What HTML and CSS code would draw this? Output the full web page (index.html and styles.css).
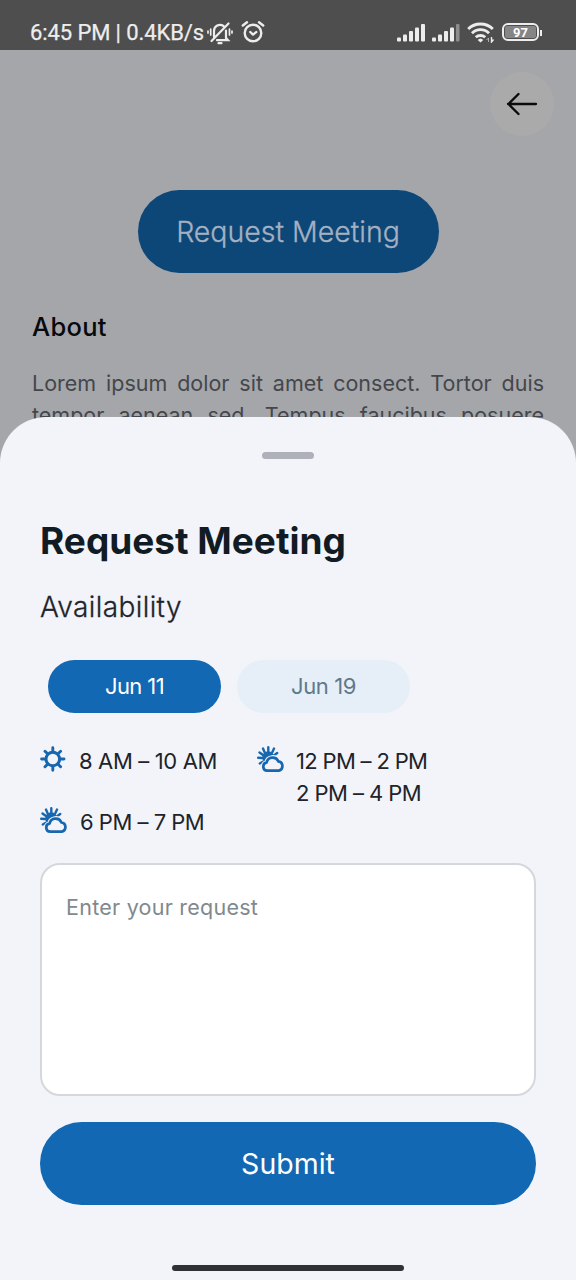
FILE: index.html
```html
<!DOCTYPE html>
<html lang="en">
<head>
<meta charset="utf-8">
<title>Request Meeting</title>
<link rel="stylesheet" href="styles.css">
</head>
<body>
<svg class="defs" width="0" height="0" aria-hidden="true">
  <symbol id="cloud-sun" viewBox="0 0 27 27">
    <path d="M11.300 1.300v4M6 2.600l1.600 3.600M17 2.600l-1.700 3.600M2.500 6.500l3.200 2.300M20.200 7l-2.700 1.900M1.200 11.800l4 .2M2.800 17.500l3-1.800" fill="none" stroke="currentColor" stroke-width="2.400" stroke-linecap="round"/>
    <circle cx="11.300" cy="11.300" r="6.100" fill="currentColor"/>
    <path d="M10.200 24.700a4.200 4.200 0 0 1-.6-8.300a6.200 6.200 0 0 1 11.700-1.100a4.800 4.800 0 0 1 .5 9.400Z" fill="#f2f4fa" stroke="#f2f4fa" stroke-width="5"/>
    <path d="M10.200 24.700a4.200 4.200 0 0 1-.6-8.300a6.200 6.200 0 0 1 11.700-1.100a4.800 4.800 0 0 1 .5 9.400Z" fill="none" stroke="currentColor" stroke-width="2.700"/>
  </symbol>
</svg>
<main class="phone">
  <header class="status">
    <span class="status-text">6:45 PM | 0.4KB/s</span>
    <svg class="bell" width="26" height="24" viewBox="0 0 26 24" fill="none" stroke="currentColor" stroke-width="2.200" stroke-linecap="round">
      <path d="M7 16V10a6 6 0 0 1 9.500-5M19 9.500v7.500l2 2.200H10M4.500 20 21.500 2.500"/>
      <path d="M11.500 22.200h3" /><path d="M3.700 8v6M1 10v2M22.500 8v6M25 10v2" stroke-width="1.700"/>
    </svg>
    <svg class="alarm" width="24" height="24" viewBox="0 0 24 24" fill="none" stroke="currentColor" stroke-width="2.400" stroke-linecap="round" stroke-linejoin="round">
      <circle cx="12" cy="13" r="8.300"/><path d="M1.800 5.500 6 2.200M22.200 5.500 18 2.200M9.300 12l2.700 2.600 3.200-2.500" />
    </svg>
    <svg class="signal first" width="28" height="20" viewBox="0 0 28 20" fill="currentColor">
      <rect y="14.500" width="4" height="4" rx="1"/><rect x="6" y="11.500" width="4" height="7" rx="1"/><rect x="12" y="8" width="4" height="10.500" rx="1"/><rect x="18" y="4.500" width="4" height="14" rx="1"/><rect x="24" y="1" width="4" height="17.500" rx="1"/>
    </svg>
    <svg class="signal" width="28" height="20" viewBox="0 0 28 20" fill="currentColor">
      <rect y="14.500" width="4" height="4" rx="1"/><rect x="6" y="11.500" width="4" height="7" rx="1"/><rect x="12" y="8" width="4" height="10.500" rx="1"/><rect x="18" y="4.500" width="4" height="14" rx="1"/><rect x="24" y="1" width="3.500" height="17.500" rx="1" opacity=".4"/>
    </svg>
    <svg class="wifi" width="28" height="21" viewBox="0 0 28 21" fill="none" stroke="currentColor" stroke-width="2.900">
      <path d="M1.200 7a17.500 17.500 0 0 1 24.600 0M5 11.200a12 12 0 0 1 17 0M8.800 15.300a7 7 0 0 1 9.400 0"/>
      <path d="m13.500 20.500-2.800-2.500q2.800-3.200 5.600 0Z" fill="currentColor" stroke="none"/>
      <path d="M21.500 20v-4l-2 2" stroke-width="1" opacity=".6"/><path d="M24.500 15v5l2-2.500" stroke-width="1.400"/>
    </svg>
    <span class="battery"><span class="charge">97</span></span><i class="battery-tip"></i>
  </header>

  <section class="profile">
    <div class="back"><svg width="32" height="24" viewBox="0 0 32 24" fill="none" stroke="#0b0b0c" stroke-width="2.300" stroke-linecap="round" stroke-linejoin="round"><path d="M30 12H2M12.500 2 2.500 12l10 10"/></svg></div>
    <div class="request"><span>Request Meeting</span></div>
    <h2 class="about">About</h2>
    <p class="bio">Lorem ipsum dolor sit amet consect. Tortor duis tempor aenean sed. Tempus faucibus posuere</p>
  </section>

  <section class="sheet">
    <div class="handle"></div>
    <h1 class="title">Request Meeting</h1>
    <h3 class="availability">Availability</h3>
    <div class="dates"><div class="date active">Jun 11</div><div class="date">Jun 19</div></div>
    <div class="slots">
      <div class="slot morning">
        <svg class="weather" viewBox="0 0 27 27" fill="none" stroke="currentColor" stroke-width="2.900" stroke-linecap="round"><circle cx="12.800" cy="13" r="6.800" stroke-width="3"/><path d="M12.800 1.800v4M12.800 20.200v4M1.600 13h4M20 13h4M5 5.200l2.600 2.600M18 18.200l2.600 2.600M20.600 5.200l-2.600 2.600M7.600 18.200l-2.600 2.600"/></svg>
        <div>8 AM – 10 AM</div>
      </div>
      <div class="slot noon"><svg class="weather"><use href="#cloud-sun"/></svg><div><span class="t1">12 PM – 2 PM</span><br><span class="t2">2 PM – 4 PM</span></div></div>
      <div class="slot evening"><svg class="weather"><use href="#cloud-sun"/></svg><div>6 PM – 7 PM</div></div>
    </div>
    <textarea class="message" placeholder="Enter your request"></textarea>
    <button class="submit">Submit</button>
    <div class="home-bar"></div>
  </section>
</main>
</body>
</html>
```
FILE: styles.css
```css
* { box-sizing: border-box; }
body { margin: 0; font-family: Inter, "Open Sans", sans-serif; }
.defs { position: absolute; }
.phone { position: relative; width: 576px; height: 1280px; overflow: hidden; background: #a4a6aa; }
.status { display: flex; align-items: center; height: 50px; padding: 15px 32px 0 30px; background: #4e4e4e; color: #ededed; }
.status-text { width: 173px; padding-top: 1px; font: 400 22px/36px Roboto, sans-serif; -webkit-text-stroke: .25px; letter-spacing: -.1px; white-space: nowrap; }
.bell { margin-left: 4px; }
.alarm { margin-left: 8px; margin-top: -2px; }
.signal { margin-left: 7px; }
.signal.first { margin-left: 132px; }
.wifi { margin-left: 7px; flex: none; }
.battery { display: flex; width: 37px; height: 18px; margin-left: 7px; margin-top: -1px; padding: 1px; border: 2px solid #ededed; border-radius: 6px; }
.charge { flex: 1; border-radius: 2px; background: #858585; text-align: center; font: 700 13px/13px Roboto, sans-serif; color: #fff; }
.battery-tip { width: 2px; height: 6px; margin-left: 1px; background: #ededed; }
.profile { display: flex; flex-direction: column; padding: 22px 32px 0; }
.back { display: grid; place-items: center; align-self: flex-end; width: 64px; height: 64px; margin-right: -10px; border-radius: 50%; background: #aaaaaa; }
.request { display: grid; place-items: center; align-self: center; width: 301px; height: 83px; margin-top: 54px; border-radius: 42px; background: #0d4778; color: #a4b1c1; font-size: 28.5px; font-weight: 300; -webkit-text-stroke: .3px; }
.about { margin: 38px 0 0; font-size: 25.5px; line-height: 32px; font-weight: 500; letter-spacing: .3px; color: #07090d; }
.bio { margin: 24px 0 0; height: 64px; font-size: 21.5px; line-height: 32px; text-align: justify; text-align-last: justify; color: #45464b; }
.sheet { position: absolute; inset: 417px 0 0; display: flex; flex-direction: column; padding: 35px 40px 0; border-radius: 46px 46px 0 0; background: #f2f4fa; color: #202329; }
.handle { width: 52px; height: 7px; align-self: center; flex: none; border-radius: 4px; background: #aeb0ba; }
.title { margin: 60px 0 0; font-size: 37px; line-height: 44px; font-weight: 700; color: #111b23; white-space: nowrap; }
.availability { margin: 25px 0 0; font-size: 28px; line-height: 38px; font-weight: 300; -webkit-text-stroke: .3px; letter-spacing: .4px; }
.dates { display: flex; gap: 16px; margin: 34px 0 0 8px; }
.date { width: 173px; height: 53px; border-radius: 27px; background: #e6eff7; color: #607889; font-size: 22px; line-height: 53px; letter-spacing: -.6px; text-align: center; }
.date:not(.active) { letter-spacing: -.4px; }
.date.active { background: #1268b2; color: #fff; }
.slots { display: grid; grid-template-columns: 217px 1fr; grid-template-rows: 61px 32px; margin-top: 32px; font-size: 22px; line-height: 32px; letter-spacing: -.35px; white-space: nowrap; }
.slot { display: flex; gap: 12px; }
.slot.evening { gap: 13px; letter-spacing: -.5px; }
.t1 { letter-spacing: -.68px; }
.t2 { letter-spacing: -.55px; }
.weather { width: 27px; height: 27px; margin-top: 1px; flex: none; color: #1767b0; }
.message { height: 233px; margin: 25px 0 0; padding: 26px 24px; resize: none; border: 2px solid #d5d8da; border-radius: 20px; background: #fff; font: 400 21.5px/32px Inter, sans-serif; letter-spacing: .25px; }
.message::placeholder { color: #7f898e; opacity: 1; }
.submit { height: 83px; flex: none; margin-top: 26px; padding: 0; border: 0; border-radius: 42px; background: #1268b2; color: #fff; font: 400 28.5px Inter, sans-serif; }
.home-bar { width: 232px; height: 6px; flex: none; margin: 60px auto 0; border-radius: 3px; background: #303136; }
```
